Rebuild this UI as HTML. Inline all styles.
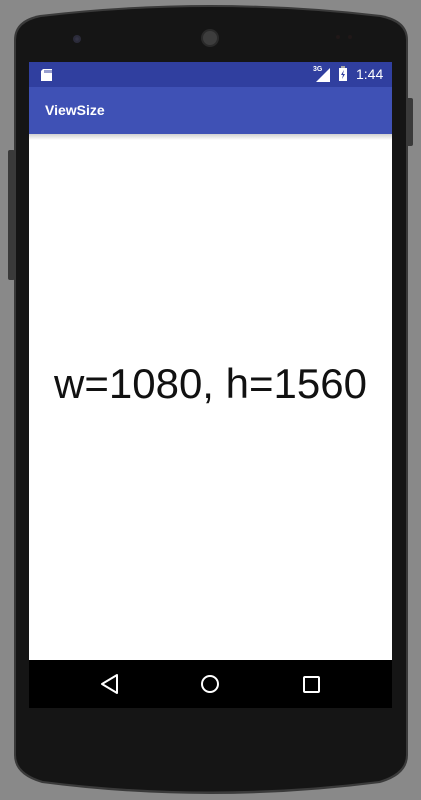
<!DOCTYPE html>
<html><head><style>
html,body{margin:0;padding:0;width:421px;height:800px;background:#898989;overflow:hidden;font-family:"Liberation Sans",Roboto,sans-serif}
.abs{position:absolute}
</style></head><body>
<svg class="abs" style="left:0;top:0" width="421" height="800">
 <rect x="8" y="150" width="7" height="130" rx="2" fill="#3a3a3a"/>
 <rect x="406" y="98" width="7" height="48" rx="2" fill="#3a3a3a"/>
 <path d="M14 40 Q14 20 40 15 Q210 -5 381 15 Q408 20 408 40 L408 755 Q408 775 380 783 Q210 805 42 783 Q14 775 14 755 Z" fill="#3a3a3a"/>
 <path d="M16 40 Q16 22 41 17 Q210 -3 380 17 Q406 22 406 40 L406 755 Q406 773 379 781 Q210 802 43 781 Q16 773 16 755 Z" fill="#151515"/>
 <circle cx="77" cy="39" r="4" fill="#2b2b3a"/><circle cx="77" cy="39" r="1.8" fill="#334"/>
 <circle cx="210" cy="38" r="9" fill="#2a2a2a"/><circle cx="210" cy="38" r="7" fill="#3d3d3d"/>
 <circle cx="338" cy="37" r="2" fill="#201818"/><circle cx="350" cy="37" r="2" fill="#201818"/>
</svg>
<div class="abs" style="left:29px;top:62px;width:363px;height:25px;background:#303f9f"></div>
<div class="abs" style="left:29px;top:87px;width:363px;height:47px;background:#3f51b5"></div>
<div class="abs" style="left:29px;top:134px;width:363px;height:526px;background:#fff"></div>
<div class="abs" style="left:29px;top:134px;width:363px;height:6px;background:linear-gradient(#d0d0d0,#fff)"></div>
<div class="abs" style="left:45px;top:102px;color:#fff;font-size:14px;font-weight:bold">ViewSize</div>
<svg class="abs" style="left:40px;top:68px" width="14" height="14"><path d="M3 1H12V13H1V3Z" fill="#fff"/><path d="M5 2v3M7 2v3M9 2v3M11 2v3" stroke="#303f9f" stroke-width="1"/></svg>
<div class="abs" style="left:313px;top:66px;color:#fff;font-size:7px;font-weight:bold">3G</div>
<svg class="abs" style="left:315px;top:67px" width="16" height="16"><path d="M15 1V15H1Z" fill="#fff"/></svg>
<svg class="abs" style="left:339px;top:66px" width="10" height="16"><rect x="2" y="0" width="4" height="2" fill="#aaa"/><rect x="0" y="2" width="8" height="13" fill="#fff"/><path d="M5 4L2 9H4L3 13L6 8H4Z" fill="#303f9f"/></svg>
<div class="abs" style="left:356px;top:66px;color:#fff;font-size:14px">1:44</div>
<div class="abs" style="left:29px;top:360px;width:363px;text-align:center;color:#111;font-size:42px">w=1080, h=1560</div>
<div class="abs" style="left:29px;top:660px;width:363px;height:48px;background:#000"></div>
<svg class="abs" style="left:29px;top:660px" width="363" height="48">
 <path d="M73 24L88 15V33Z" fill="none" stroke="#fff" stroke-width="2" stroke-linejoin="round"/>
 <circle cx="181" cy="24" r="8" fill="none" stroke="#fff" stroke-width="2"/>
 <rect x="275" y="17" width="15" height="15" rx="1" fill="none" stroke="#fff" stroke-width="2"/>
</svg>
</body></html>
